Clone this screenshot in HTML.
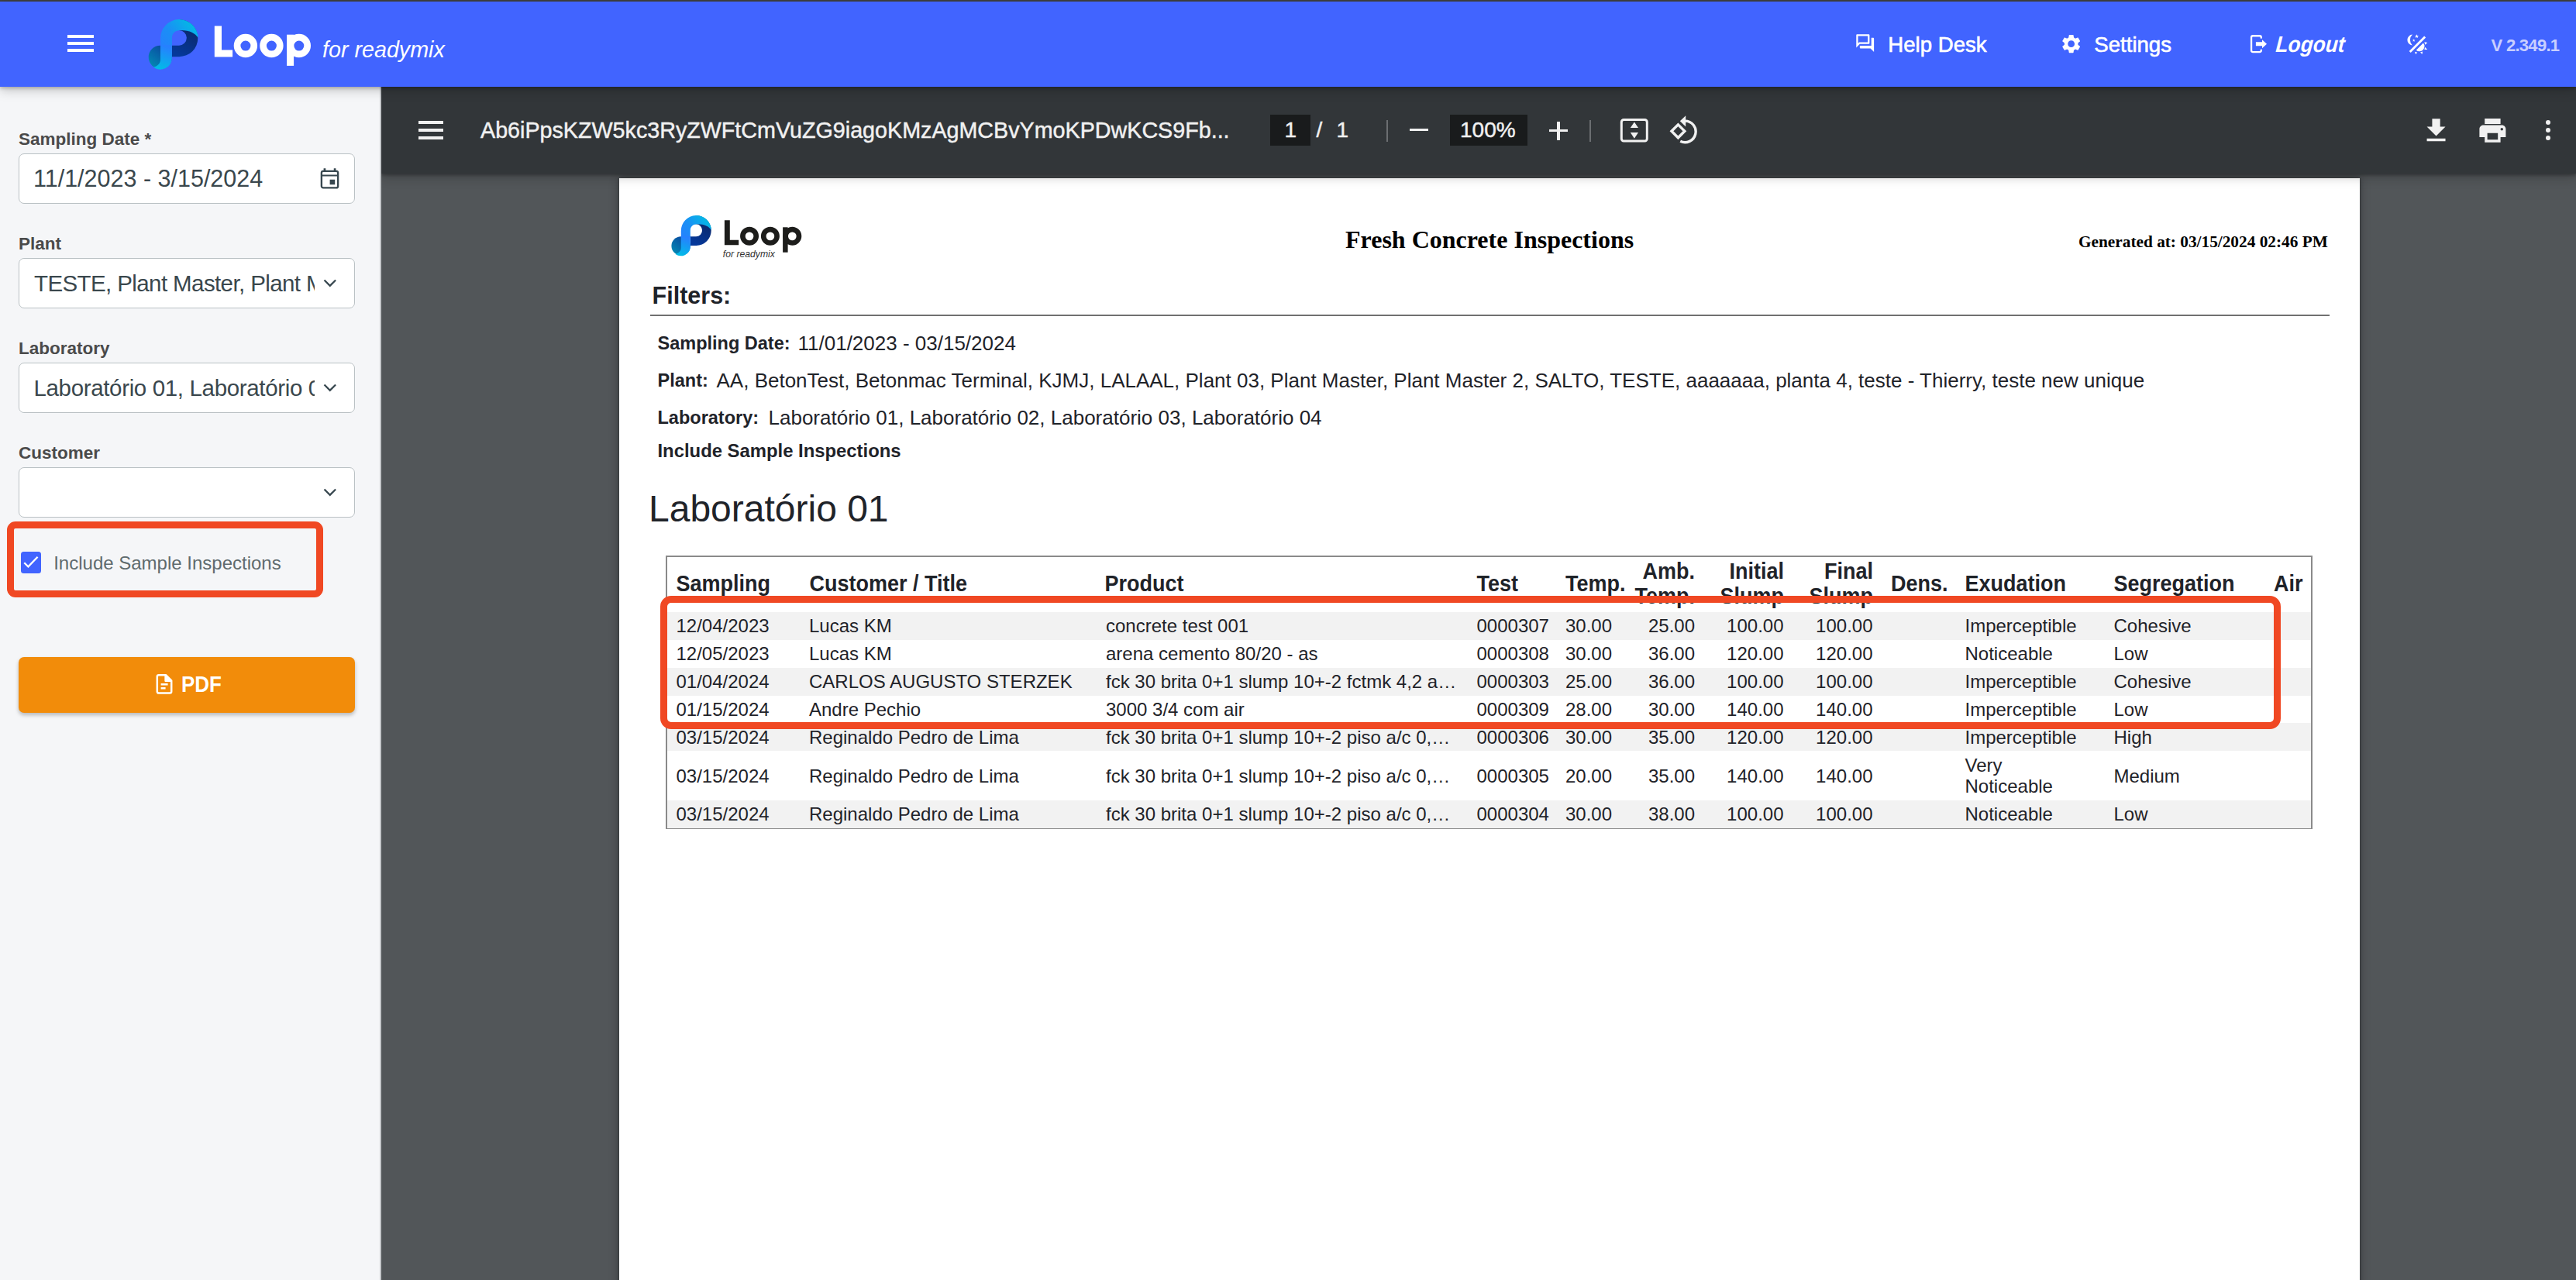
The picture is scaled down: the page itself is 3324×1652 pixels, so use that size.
<!DOCTYPE html>
<html><head><meta charset="utf-8">
<style>
*{margin:0;padding:0;box-sizing:border-box}
html,body{width:3324px;height:1652px;overflow:hidden;background:#525659;font-family:"Liberation Sans",sans-serif}
.a{position:absolute}
.t{position:absolute;line-height:1;white-space:nowrap}
.b{font-weight:bold}
.serif{font-family:"Liberation Serif",serif}
#topstrip{left:0;top:0;width:3324px;height:2px;background:#414141}
#header{left:0;top:2px;width:3324px;height:110px;background:#4164ff;z-index:5;box-shadow:0 2px 4px rgba(0,0,0,.2),0 4px 14px rgba(0,0,0,.22)}
#sidebar{left:0;top:112px;width:492px;height:1540px;background:#f5f6f8;border-right:2px solid #c4c7ca}
#viewer{left:492px;top:112px;width:2832px;height:1540px;background:#525659;overflow:hidden}
#toolbar{left:0;top:0;width:2832px;height:112px;background:#323639;z-index:3;box-shadow:0 2px 4px rgba(0,0,0,.3),0 4px 12px rgba(0,0,0,.15),0 8px 16px rgba(0,0,0,.06)}
#page{left:307px;top:118px;width:2246px;height:1560px;background:#fff;box-shadow:0 0 3px rgba(0,0,0,.35),0 0 12px rgba(0,0,0,.3)}
.lbl{color:#4a4a4a;font-weight:bold;font-size:22.5px}
.inp{position:absolute;left:24px;width:434px;height:65px;background:#fff;border:1.5px solid #bac1c4;border-radius:7px}
.itx{color:#3a474d;font-size:30.5px}
.hd{color:#fff;font-size:27.6px;-webkit-text-stroke:0.6px #fff}
.tb{color:#f1f1f1;font-size:28.7px;-webkit-text-stroke:0.45px #f1f1f1}
.rc{font-size:24px;color:#1f2329}
.th{font-size:27px;font-weight:bold;color:#1f2329;transform:scaleY(1.07);transform-origin:0 22.86px}
.fl{font-size:23.5px;font-weight:bold;color:#1f2329}
.fv{font-size:26px;color:#1f2329}
</style></head><body>
<div id="topstrip" class="a"></div>
<div id="header" class="a">
  <div class="a" style="left:87px;top:43px;width:34px;height:4px;background:#fff"></div>
  <div class="a" style="left:87px;top:52px;width:34px;height:4px;background:#fff"></div>
  <div class="a" style="left:87px;top:61px;width:34px;height:4px;background:#fff"></div>
  <svg class="a" style="left:185px;top:18px" width="80" height="75" viewBox="0 0 80 75">
    <defs>
      <linearGradient id="lgA" gradientUnits="userSpaceOnUse" x1="68" y1="12" x2="26" y2="48">
        <stop offset="0" stop-color="#00bde3"/><stop offset="0.55" stop-color="#1a8ff5"/><stop offset="1" stop-color="#2680ff"/></linearGradient>
      <linearGradient id="lgS" gradientUnits="userSpaceOnUse" x1="30" y1="40" x2="20" y2="70">
        <stop offset="0" stop-color="#2680ff"/><stop offset="1" stop-color="#00bde6"/></linearGradient>
      <linearGradient id="lgT" gradientUnits="userSpaceOnUse" x1="10" y1="64" x2="28" y2="42">
        <stop offset="0" stop-color="#0386b3"/><stop offset="1" stop-color="#0a4aa0"/></linearGradient>
      <linearGradient id="lgN" gradientUnits="userSpaceOnUse" x1="60" y1="20" x2="45" y2="50">
        <stop offset="0" stop-color="#0a2a70"/><stop offset="1" stop-color="#05389a"/></linearGradient>
    </defs>
    <circle cx="21.8" cy="53.8" r="15.1" fill="url(#lgT)"/>
    <path fill-rule="evenodd" fill="url(#lgN)" d="M36.9,14L46.3,5.2A24,24 0 0 1 46.3,53.2H36.9Z M36.9,19V38.7H46A9.85,9.85 0 0 0 46,19Z"/>
    <path fill="url(#lgA)" d="M22,30A24.3,24.3 0 0 1 70.6,28.7C67,23 60,19 48,19C41,19 36.9,23 36.9,29V40H22Z"/>
    <path fill="url(#lgS)" d="M22,38H36.9V56A15.1,15.1 0 0 1 13,66.8C18,65.5 22,62 22,57Z"/>
  </svg>
  <svg class="a" style="left:270px;top:23px" width="140" height="70" viewBox="0 0 140 70"><g fill="#fff"><path d="M6.8,8.5H16V39.4H30.1V48.4H6.8Z"/><rect x="100.1" y="19.7" width="9" height="40.2"/></g><g fill="none" stroke="#fff" stroke-width="8.7"><circle cx="46.9" cy="34.05" r="10.85"/><circle cx="80.4" cy="34.05" r="10.85"/><circle cx="115.8" cy="34.05" r="10.85"/></g></svg>
  <div class="t" style="left:416px;top:48.1px;font-size:28.7px;color:#fff;font-style:italic">for readymix</div>

  <svg class="a" style="left:2392.5px;top:40.3px" width="27.4" height="27.4" viewBox="0 0 24 24"><path fill="#fff" d="M15 4v7H5.17L4 12.17V4h11m1-2H3c-.55 0-1 .45-1 1v14l4-4h10c.55 0 1-.45 1-1V3c0-.55-.45-1-1-1zm5 4h-2v9H6v2c0 .55.45 1 1 1h11l4 4V7c0-.55-.45-1-1-1z"/></svg>
  <div class="t hd" style="left:2436.3px;top:42.1px">Help Desk</div>
  <svg class="a" style="left:2657.8px;top:39.8px" width="29.3" height="29.3" viewBox="0 0 24 24"><path fill="#fff" d="M19.14 12.94c.04-.3.06-.61.06-.94 0-.32-.02-.64-.07-.94l2.03-1.58c.18-.14.23-.41.12-.61l-1.92-3.32c-.12-.22-.37-.29-.59-.22l-2.39.96c-.5-.38-1.03-.7-1.62-.94l-.36-2.54c-.04-.24-.24-.41-.48-.41h-3.84c-.24 0-.43.17-.47.41l-.36 2.54c-.59.24-1.13.57-1.62.94l-2.39-.96c-.22-.08-.47 0-.59.22L2.74 8.87c-.12.21-.08.47.12.61l2.03 1.58c-.05.3-.09.63-.09.94s.02.64.07.94l-2.03 1.58c-.18.14-.23.41-.12.61l1.92 3.32c.12.22.37.29.59.22l2.39-.96c.5.38 1.030.7 1.62.94l.36 2.54c.05.24.24.41.48.41h3.84c.24 0 .44-.17.47-.41l.36-2.54c.59-.24 1.13-.56 1.62-.94l2.39.96c.22.08.47 0 .59-.22l1.92-3.32c.12-.22.07-.47-.12-.61l-2.01-1.58zM12 15.6c-1.98 0-3.6-1.62-3.6-3.6s1.62-3.6 3.6-3.6 3.6 1.62 3.6 3.6-1.62 3.6-3.6 3.6z"/></svg>
  <div class="t hd" style="left:2702.3px;top:42.1px">Settings</div>
  <svg class="a" style="left:2900px;top:36.7px" width="30" height="32" viewBox="0 0 30 32">
    <path fill="none" stroke="#fff" stroke-width="2.3" stroke-linejoin="round" stroke-linecap="round" d="M17.8,9.75V9.25Q17.8,7.25 15.8,7.25H7.05Q5.05,7.25 5.05,9.25V26.05Q5.05,28.05 7.05,28.05H15.8Q17.8,28.05 17.8,26.05V25.55"/>
    <path fill="#fff" d="M10.9,15.3H19V12.2L25,17.8L19,23.3V20.3H10.9Z"/>
  </svg>
  <div class="t b" style="left:2936px;top:42.8px;font-size:26.3px;font-style:italic;color:#fff;transform:scaleY(1.1) skewX(-5deg);transform-origin:0 22.3px">Logout</div>
  <svg class="a" style="left:3100px;top:38px" width="36" height="36" viewBox="0 0 36 36">
    <path fill="#fff" d="M13,4.5A7.02,7.02 0 0 0 12.8,18.5A9.67,9.67 0 0 1 13,4.5Z"/>
    <path fill="#fff" d="M18.50,4.20L19.18,5.97L21.07,6.07L19.59,7.26L20.09,9.08L18.50,8.05L16.91,9.08L17.41,7.26L15.93,6.07L17.82,5.97Z M14.70,10.20L15.20,11.41L16.51,11.51L15.51,12.36L15.82,13.64L14.70,12.95L13.58,13.64L13.89,12.36L12.89,11.51L14.20,11.41Z"/>
    <path fill="none" stroke="#fff" stroke-width="2.8" d="M9.7,27L29.2,7.5"/>
    <path fill="#fff" d="M26.9,15.6A6.45,6.45 0 0 1 17.8,24.7Z M28.4,14.2L32.3,15.1L29.3,17.7Z M29.1,20.8L32.3,24L28.4,24Z M23,27.6L26.1,26.5L25.5,30Z M16,26.8L19.3,27.8L17,30Z"/>
  </svg>
  <div class="t b" style="left:3214.5px;top:46.2px;font-size:22px;letter-spacing:-0.7px;color:#c9cfff">V 2.349.1</div>
</div>
<div id="sidebar" class="a">
  <div class="t lbl" style="left:24px;top:57px">Sampling Date *</div>
  <div class="inp" style="top:86px">
    <svg class="a" style="left:386.3px;top:15.6px" width="30" height="32" viewBox="0 0 30 32"><rect x="3.875" y="5.875" width="21.25" height="21.45" rx="2.2" fill="none" stroke="#37474f" stroke-width="2.35"/><path fill="#37474f" d="M6.6,2.2H9.3V6H6.6Z M19.75,2.2H22.4V6H19.75Z M4,10.5H25V12.5H4Z M14.6,16.75H21.2V23.16H14.6Z"/></svg>
  </div>
  <div class="t itx" style="left:43px;top:103.2px">11/1/2023 - 3/15/2024</div>
  <div class="t lbl" style="left:24px;top:192px">Plant</div>
  <div class="inp" style="top:221px"><svg class="a" style="left:391px;top:24.8px" width="20" height="14" viewBox="0 0 20 14"><path fill="none" stroke="#37474f" stroke-width="2.3" d="M2.5,2.5L9.8,9.8L17.1,2.5"/></svg></div>
  <div class="t itx" style="left:44px;top:238.6px;width:362px;overflow:hidden;font-size:29.5px;letter-spacing:-0.6px">TESTE, Plant Master, Plant Master 2</div>
  <div class="t lbl" style="left:24px;top:326.8px">Laboratory</div>
  <div class="inp" style="top:356px"><svg class="a" style="left:391px;top:24.8px" width="20" height="14" viewBox="0 0 20 14"><path fill="none" stroke="#37474f" stroke-width="2.3" d="M2.5,2.5L9.8,9.8L17.1,2.5"/></svg></div>
  <div class="t itx" style="left:43.5px;top:373.6px;width:362.5px;overflow:hidden;font-size:29.5px;letter-spacing:-0.35px">Laboratório 01, Laboratório 02</div>
  <div class="t lbl" style="left:24px;top:461.8px">Customer</div>
  <div class="inp" style="top:491px"><svg class="a" style="left:391px;top:24.8px" width="20" height="14" viewBox="0 0 20 14"><path fill="none" stroke="#37474f" stroke-width="2.3" d="M2.5,2.5L9.8,9.8L17.1,2.5"/></svg></div>
  <div class="a" style="left:9.4px;top:560.5px;width:407.6px;height:98.1px;border:9.4px solid #f04823;border-radius:11px"></div>
  <div class="a" style="left:27px;top:600px;width:26px;height:27.5px;background:#4164ff;border-radius:3.5px">
    <svg class="a" style="left:3px;top:4px" width="22" height="22" viewBox="0 0 22 22"><path fill="none" stroke="#fff" stroke-width="2.3" d="M1.25,10.25L6.4,15.4L18.6,2.75"/></svg>
  </div>
  <div class="t" style="left:69.2px;top:602.7px;font-size:24px;color:#5f6b6e">Include Sample Inspections</div>
  <div class="a" style="left:24px;top:735.5px;width:434px;height:72.2px;background:#f28c0a;border-radius:7px;box-shadow:0 3px 5px rgba(0,0,0,.25)">
    <svg class="a" style="left:175px;top:20px" width="26" height="30" viewBox="0 0 26 30"><path fill="none" stroke="#fff" stroke-width="2.5" stroke-linejoin="round" d="M5.8,3.15H15L22.2,10.35V24.55Q22.2,26.55 20.2,26.55H5.8Q3.8,26.55 3.8,24.55V5.15Q3.8,3.15 5.8,3.15Z M14.6,3.6V10.75H21.8"/><path fill="none" stroke="#fff" stroke-width="2.4" d="M8.6,15.3H17.6M8.6,20.3H14.6"/><path fill="#fff" d="M14,3.2L22.2,10.4V11.4H14Z"/></svg>
    <div class="t b" style="left:210px;top:23px;font-size:26px;color:#fff;transform:scaleY(1.14);transform-origin:0 22px">PDF</div>
  </div>
</div>
<div id="viewer" class="a">
  <div id="toolbar" class="a">
    <div class="a" style="left:48px;top:44px;width:32px;height:4px;background:#f1f1f1"></div>
    <div class="a" style="left:48px;top:54px;width:32px;height:4px;background:#f1f1f1"></div>
    <div class="a" style="left:48px;top:64px;width:32px;height:4px;background:#f1f1f1"></div>
    <div class="t tb" style="left:128px;top:41.8px">Ab6iPpsKZW5kc3RyZWFtCmVuZG9iagoKMzAgMCBvYmoKPDwKCS9Fb...</div>
    <div class="a" style="left:1147px;top:36px;width:52px;height:40px;background:#191b1c"></div>
    <div class="t tb" style="left:1165.5px;top:42.3px;font-size:28px">1</div>
    <div class="t tb" style="left:1206.5px;top:42.3px;font-size:28px">/</div>
    <div class="t tb" style="left:1232.5px;top:42.3px;font-size:28px">1</div>
    <div class="a" style="left:1297px;top:43px;width:2px;height:28px;background:#6b6e71"></div>
    <div class="a" style="left:1327px;top:54px;width:23.5px;height:3.4px;background:#f1f1f1"></div>
    <div class="a" style="left:1379px;top:36px;width:100px;height:40px;background:#191b1c"></div>
    <div class="t tb" style="left:1392px;top:42.3px;font-size:28px">100%</div>
    <div class="a" style="left:1507px;top:54.8px;width:24px;height:3.4px;background:#f1f1f1"></div>
    <div class="a" style="left:1517.3px;top:44.5px;width:3.4px;height:24px;background:#f1f1f1"></div>
    <div class="a" style="left:1559px;top:43px;width:2px;height:28px;background:#6b6e71"></div>
    <svg class="a" style="left:1598px;top:40px" width="38" height="32" viewBox="0 0 38 32">
      <rect x="2.3" y="2.5" width="33" height="27.5" rx="3" fill="none" stroke="#f1f1f1" stroke-width="3"/>
      <path fill="#f1f1f1" d="M18.9,5.5L24,13H13.8Z M13.8,19H24L18.9,26.8Z"/>
    </svg>
    <svg class="a" style="left:1660px;top:35px" width="40" height="40" viewBox="0 0 40 40">
      <path fill="none" stroke="#f1f1f1" stroke-width="3.4" d="M4.95,22.3L13.4,13.85L21.85,22.3L13.4,30.75Z"/>
      <path fill="none" stroke="#f1f1f1" stroke-width="3.4" d="M22.3,9.1A13.8,13.8 0 1 1 16.25,35.3"/>
      <path fill="#f1f1f1" d="M15.8,9.3L23.2,2.2V16.4Z"/>
    </svg>
    <svg class="a" style="left:2631.4px;top:35.7px" width="41.1" height="41.1" viewBox="0 0 24 24"><path fill="#f1f1f1" d="M19 9h-4V3H9v6H5l7 7 7-7zM5 18v2h14v-2H5z"/></svg>
    <svg class="a" style="left:2703.6px;top:35.9px" width="40.8" height="40.8" viewBox="0 0 24 24"><path fill="#f1f1f1" d="M19 8H5c-1.66 0-3 1.34-3 3v6h4v4h12v-4h4v-6c0-1.66-1.34-3-3-3zm-3 11H8v-5h8v5zm3-7c-.55 0-1-.45-1-1s.45-1 1-1 1 .45 1 1-.45 1-1 1zm1-9H6v4h12V3z"/></svg>
    <div class="a" style="left:2792.7px;top:42.7px;width:6.6px;height:6.6px;border-radius:50%;background:#f1f1f1"></div>
    <div class="a" style="left:2792.7px;top:52.7px;width:6.6px;height:6.6px;border-radius:50%;background:#f1f1f1"></div>
    <div class="a" style="left:2792.7px;top:62.7px;width:6.6px;height:6.6px;border-radius:50%;background:#f1f1f1"></div>
  </div>
  <div id="page" class="a">
    <svg class="a" style="left:62px;top:43.7px" width="64.6" height="60.5" viewBox="0 0 80 75">
    <defs>
      <linearGradient id="lgA2" gradientUnits="userSpaceOnUse" x1="68" y1="12" x2="26" y2="48">
        <stop offset="0" stop-color="#00bde3"/><stop offset="0.55" stop-color="#1a8ff5"/><stop offset="1" stop-color="#2680ff"/></linearGradient>
      <linearGradient id="lgS2" gradientUnits="userSpaceOnUse" x1="30" y1="40" x2="20" y2="70">
        <stop offset="0" stop-color="#2680ff"/><stop offset="1" stop-color="#00bde6"/></linearGradient>
      <linearGradient id="lgT2" gradientUnits="userSpaceOnUse" x1="10" y1="64" x2="28" y2="42">
        <stop offset="0" stop-color="#0386b3"/><stop offset="1" stop-color="#0a4aa0"/></linearGradient>
      <linearGradient id="lgN2" gradientUnits="userSpaceOnUse" x1="60" y1="20" x2="45" y2="50">
        <stop offset="0" stop-color="#0a2a70"/><stop offset="1" stop-color="#05389a"/></linearGradient>
    </defs>
    <circle cx="21.8" cy="53.8" r="15.1" fill="url(#lgT2)"/>
    <path fill-rule="evenodd" fill="url(#lgN2)" d="M36.9,14L46.3,5.2A24,24 0 0 1 46.3,53.2H36.9Z M36.9,19V38.7H46A9.85,9.85 0 0 0 46,19Z"/>
    <path fill="url(#lgA2)" d="M22,30A24.3,24.3 0 0 1 70.6,28.7C67,23 60,19 48,19C41,19 36.9,23 36.9,29V40H22Z"/>
    <path fill="url(#lgS2)" d="M22,38H36.9V56A15.1,15.1 0 0 1 13,66.8C18,65.5 22,62 22,57Z"/>
  </svg>
    <svg class="a" style="left:130px;top:50px" width="110" height="50" viewBox="0 0 110 50"><g fill="#1d1d1b"><path d="M5.9,4.2H12.8V29.8H24.2V36.2H5.9Z"/><rect x="81.1" y="13.3" width="6.5" height="32.4"/></g><g fill="none" stroke="#1d1d1b" stroke-width="6.65"><circle cx="38.05" cy="24.85" r="8.68"/><circle cx="64.9" cy="24.85" r="8.68"/><circle cx="93.3" cy="24.85" r="8.68"/></g></svg>
    <div class="t" style="left:133.8px;top:92.2px;font-size:12.2px;color:#333;font-style:italic">for readymix</div>
    <div class="t serif b" style="left:937px;top:62.8px;font-size:32px;color:#000">Fresh Concrete Inspections</div>
    <div class="t serif b" style="left:1883px;top:72px;font-size:21.3px;color:#000">Generated at: 03/15/2024 02:46 PM</div>
    <div class="t b" style="left:42.6px;top:135.7px;font-size:30.5px;color:#1f2329">Filters:</div>
    <div class="a" style="left:40px;top:176px;width:2167px;height:2px;background:#707070"></div>
    <div class="t" style="left:38px;top:402.8px;font-size:48px;color:#1f2329">Laboratório 01</div>
    <!--FLT-->
    <div class="t fl" style="left:49.5px;top:202.1px">Sampling Date:</div>
    <div class="t fv" style="left:230.5px;top:200.0px">11/01/2023 - 03/15/2024</div>
    <div class="t fl" style="left:49.5px;top:250.1px">Plant:</div>
    <div class="t fv" style="left:125.5px;top:248.0px">AA, BetonTest, Betonmac Terminal, KJMJ, LALAAL, Plant 03, Plant Master, Plant Master 2, SALTO, TESTE, aaaaaaa, planta 4, teste - Thierry, teste new unique</div>
    <div class="t fl" style="left:49.5px;top:298.1px">Laboratory:</div>
    <div class="t fv" style="left:192.5px;top:296.0px">Laboratório 01, Laboratório 02, Laboratório 03, Laboratório 04</div>
    <div class="t fl" style="left:49.5px;top:339.8px;font-size:23.85px">Include Sample Inspections</div>
    <!--/FLT-->
    <!--TBL-->
    <div class="a" style="left:60px;top:487px;width:2125px;height:353px;border:2px solid #8a8a8a"></div>
    <div class="a" style="left:62px;top:560px;width:2121px;height:36px;background:#f2f2f2"></div>
    <div class="a" style="left:62px;top:632px;width:2121px;height:36px;background:#f2f2f2"></div>
    <div class="a" style="left:62px;top:703px;width:2121px;height:36px;background:#f2f2f2"></div>
    <div class="a" style="left:62px;top:803px;width:2121px;height:36px;background:#f2f2f2"></div>
    <div class="t rc" style="left:73.5px;top:566.3px">12/04/2023</div>
    <div class="t rc" style="left:245px;top:566.3px">Lucas KM</div>
    <div class="t rc" style="left:628px;top:566.3px">concrete test 001</div>
    <div class="t rc" style="left:1106.5px;top:566.3px">0000307</div>
    <div class="t rc" style="left:1221px;top:566.3px">30.00</div>
    <div class="t rc" style="left:1188px;top:566.3px;width:200px;text-align:right">25.00</div>
    <div class="t rc" style="left:1302.5px;top:566.3px;width:200px;text-align:right">100.00</div>
    <div class="t rc" style="left:1417.5px;top:566.3px;width:200px;text-align:right">100.00</div>
    <div class="t rc" style="left:1736.5px;top:566.3px">Imperceptible</div>
    <div class="t rc" style="left:1928.5px;top:566.3px">Cohesive</div>
    <div class="t rc" style="left:73.5px;top:602.4px">12/05/2023</div>
    <div class="t rc" style="left:245px;top:602.4px">Lucas KM</div>
    <div class="t rc" style="left:628px;top:602.4px">arena cemento 80/20 - as</div>
    <div class="t rc" style="left:1106.5px;top:602.4px">0000308</div>
    <div class="t rc" style="left:1221px;top:602.4px">30.00</div>
    <div class="t rc" style="left:1188px;top:602.4px;width:200px;text-align:right">36.00</div>
    <div class="t rc" style="left:1302.5px;top:602.4px;width:200px;text-align:right">120.00</div>
    <div class="t rc" style="left:1417.5px;top:602.4px;width:200px;text-align:right">120.00</div>
    <div class="t rc" style="left:1736.5px;top:602.4px">Noticeable</div>
    <div class="t rc" style="left:1928.5px;top:602.4px">Low</div>
    <div class="t rc" style="left:73.5px;top:638.4px">01/04/2024</div>
    <div class="t rc" style="left:245px;top:638.4px">CARLOS AUGUSTO STERZEK</div>
    <div class="t rc" style="left:628px;top:638.4px">fck 30 brita 0+1 slump 10+-2 fctmk 4,2 a…</div>
    <div class="t rc" style="left:1106.5px;top:638.4px">0000303</div>
    <div class="t rc" style="left:1221px;top:638.4px">25.00</div>
    <div class="t rc" style="left:1188px;top:638.4px;width:200px;text-align:right">36.00</div>
    <div class="t rc" style="left:1302.5px;top:638.4px;width:200px;text-align:right">100.00</div>
    <div class="t rc" style="left:1417.5px;top:638.4px;width:200px;text-align:right">100.00</div>
    <div class="t rc" style="left:1736.5px;top:638.4px">Imperceptible</div>
    <div class="t rc" style="left:1928.5px;top:638.4px">Cohesive</div>
    <div class="t rc" style="left:73.5px;top:674.4px">01/15/2024</div>
    <div class="t rc" style="left:245px;top:674.4px">Andre Pechio</div>
    <div class="t rc" style="left:628px;top:674.4px">3000 3/4 com air</div>
    <div class="t rc" style="left:1106.5px;top:674.4px">0000309</div>
    <div class="t rc" style="left:1221px;top:674.4px">28.00</div>
    <div class="t rc" style="left:1188px;top:674.4px;width:200px;text-align:right">30.00</div>
    <div class="t rc" style="left:1302.5px;top:674.4px;width:200px;text-align:right">140.00</div>
    <div class="t rc" style="left:1417.5px;top:674.4px;width:200px;text-align:right">140.00</div>
    <div class="t rc" style="left:1736.5px;top:674.4px">Imperceptible</div>
    <div class="t rc" style="left:1928.5px;top:674.4px">Low</div>
    <div class="t rc" style="left:73.5px;top:709.8px">03/15/2024</div>
    <div class="t rc" style="left:245px;top:709.8px">Reginaldo Pedro de Lima</div>
    <div class="t rc" style="left:628px;top:709.8px">fck 30 brita 0+1 slump 10+-2 piso a/c 0,…</div>
    <div class="t rc" style="left:1106.5px;top:709.8px">0000306</div>
    <div class="t rc" style="left:1221px;top:709.8px">30.00</div>
    <div class="t rc" style="left:1188px;top:709.8px;width:200px;text-align:right">35.00</div>
    <div class="t rc" style="left:1302.5px;top:709.8px;width:200px;text-align:right">120.00</div>
    <div class="t rc" style="left:1417.5px;top:709.8px;width:200px;text-align:right">120.00</div>
    <div class="t rc" style="left:1736.5px;top:709.8px">Imperceptible</div>
    <div class="t rc" style="left:1928.5px;top:709.8px">High</div>
    <div class="t rc" style="left:73.5px;top:759.9px">03/15/2024</div>
    <div class="t rc" style="left:245px;top:759.9px">Reginaldo Pedro de Lima</div>
    <div class="t rc" style="left:628px;top:759.9px">fck 30 brita 0+1 slump 10+-2 piso a/c 0,…</div>
    <div class="t rc" style="left:1106.5px;top:759.9px">0000305</div>
    <div class="t rc" style="left:1221px;top:759.9px">20.00</div>
    <div class="t rc" style="left:1188px;top:759.9px;width:200px;text-align:right">35.00</div>
    <div class="t rc" style="left:1302.5px;top:759.9px;width:200px;text-align:right">140.00</div>
    <div class="t rc" style="left:1417.5px;top:759.9px;width:200px;text-align:right">140.00</div>
    <div class="t rc" style="left:1736.5px;top:745.9px">Very</div>
    <div class="t rc" style="left:1736.5px;top:773.4px">Noticeable</div>
    <div class="t rc" style="left:1928.5px;top:759.9px">Medium</div>
    <div class="t rc" style="left:73.5px;top:809.4px">03/15/2024</div>
    <div class="t rc" style="left:245px;top:809.4px">Reginaldo Pedro de Lima</div>
    <div class="t rc" style="left:628px;top:809.4px">fck 30 brita 0+1 slump 10+-2 piso a/c 0,…</div>
    <div class="t rc" style="left:1106.5px;top:809.4px">0000304</div>
    <div class="t rc" style="left:1221px;top:809.4px">30.00</div>
    <div class="t rc" style="left:1188px;top:809.4px;width:200px;text-align:right">38.00</div>
    <div class="t rc" style="left:1302.5px;top:809.4px;width:200px;text-align:right">100.00</div>
    <div class="t rc" style="left:1417.5px;top:809.4px;width:200px;text-align:right">100.00</div>
    <div class="t rc" style="left:1736.5px;top:809.4px">Noticeable</div>
    <div class="t rc" style="left:1928.5px;top:809.4px">Low</div>
    <div class="t th" style="left:73.5px;top:511.1px">Sampling</div>
    <div class="t th" style="left:245.5px;top:511.1px">Customer / Title</div>
    <div class="t th" style="left:626.5px;top:511.1px">Product</div>
    <div class="t th" style="left:1106.5px;top:511.1px">Test</div>
    <div class="t th" style="left:1221px;top:511.1px">Temp.</div>
    <div class="t th" style="left:1188px;top:495.1px;width:200px;text-align:right">Amb.</div>
    <div class="t th" style="left:1188px;top:527.1px;width:200px;text-align:right">Temp.</div>
    <div class="t th" style="left:1303px;top:495.1px;width:200px;text-align:right">Initial</div>
    <div class="t th" style="left:1303px;top:527.1px;width:200px;text-align:right">Slump</div>
    <div class="t th" style="left:1418px;top:495.1px;width:200px;text-align:right">Final</div>
    <div class="t th" style="left:1418px;top:527.1px;width:200px;text-align:right">Slump</div>
    <div class="t th" style="left:1641px;top:511.1px">Dens.</div>
    <div class="t th" style="left:1736.5px;top:511.1px">Exudation</div>
    <div class="t th" style="left:1928.5px;top:511.1px">Segregation</div>
    <div class="t th" style="left:2135px;top:511.1px">Air</div>
    <!--/TBL-->
    <div class="a" style="left:53px;top:539px;width:2091px;height:171.6px;border:9.5px solid #f04823;border-radius:14px"></div>
  </div>
</div>
</body></html>
